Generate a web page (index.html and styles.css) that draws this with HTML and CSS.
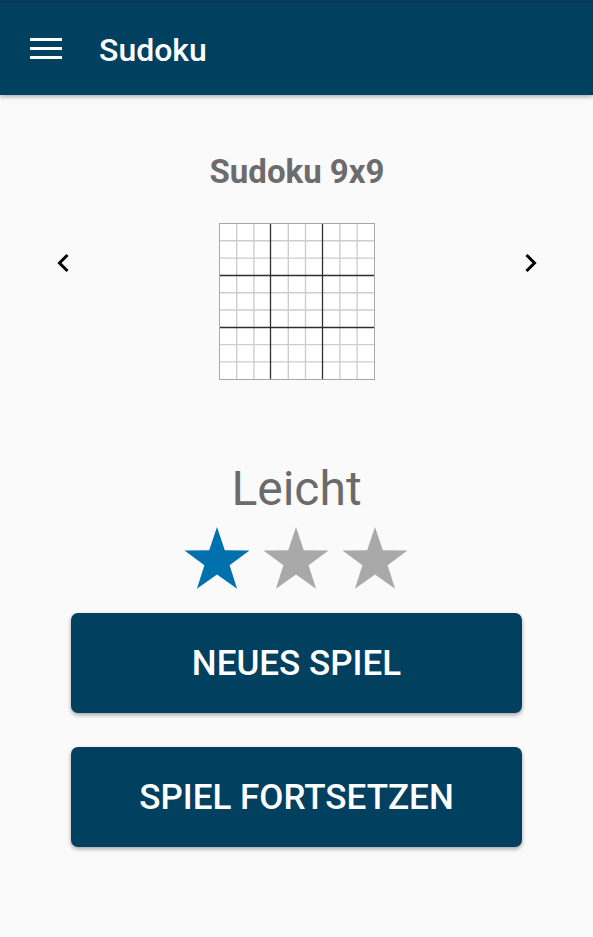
FILE: index.html
```html
<!DOCTYPE html>
<html lang="de">
<head>
<meta charset="utf-8">
<title>Sudoku</title>
<link rel="stylesheet" href="styles.css">
</head>
<body>
<header class="appbar">
  <svg class="menu-icon" width="32" height="24" viewBox="0 0 32 24" aria-hidden="true">
    <rect x="0" y="2" width="32" height="3" fill="#fff"/>
    <rect x="0" y="11" width="32" height="3" fill="#fff"/>
    <rect x="0" y="20" width="32" height="3" fill="#fff"/>
  </svg>
  <h1 class="appbar-title">Sudoku</h1>
</header>
<main class="content">
  <h2 class="game-title">Sudoku 9x9</h2>
  <div class="picker">
    <svg class="chevron" width="24" height="24" viewBox="0 0 24 24" aria-hidden="true">
      <path d="M15.5 4 L7.5 12 L15.5 20" fill="none" stroke="#000" stroke-width="3"/>
    </svg>
    <svg class="grid" width="156" height="157" viewBox="0 0 156 157" aria-hidden="true">
      <rect x="0.5" y="0.5" width="155" height="156" fill="#fff" stroke="#a8a8a8" stroke-width="1"/>
      <g stroke="#cdcdcd" stroke-width="1.4">
        <line x1="17.7" y1="1" x2="17.7" y2="156"/>
        <line x1="34.9" y1="1" x2="34.9" y2="156"/>
        <line x1="69.3" y1="1" x2="69.3" y2="156"/>
        <line x1="86.5" y1="1" x2="86.5" y2="156"/>
        <line x1="120.9" y1="1" x2="120.9" y2="156"/>
        <line x1="138.1" y1="1" x2="138.1" y2="156"/>
        <line x1="1" y1="17.8" x2="155" y2="17.8"/>
        <line x1="1" y1="35.1" x2="155" y2="35.1"/>
        <line x1="1" y1="69.7" x2="155" y2="69.7"/>
        <line x1="1" y1="87" x2="155" y2="87"/>
        <line x1="1" y1="121.6" x2="155" y2="121.6"/>
        <line x1="1" y1="138.9" x2="155" y2="138.9"/>
      </g>
      <g stroke="#2e2e2e" stroke-width="1.3">
        <line x1="51.5" y1="1" x2="51.5" y2="156"/>
        <line x1="103.5" y1="1" x2="103.5" y2="156"/>
        <line x1="1" y1="52.5" x2="155" y2="52.5"/>
        <line x1="1" y1="104.5" x2="155" y2="104.5"/>
      </g>
    </svg>
    <svg class="chevron" width="24" height="24" viewBox="0 0 24 24" aria-hidden="true">
      <path d="M8.5 4 L16.5 12 L8.5 20" fill="none" stroke="#000" stroke-width="3"/>
    </svg>
  </div>
  <p class="level">Leicht</p>
  <div class="stars">
    <svg class="star" width="66" height="62" viewBox="0 0 66 62" aria-hidden="true">
      <path d="M33 0 L40.8 23.3 L65.5 23.5 L45.6 38.2 L53.1 61.7 L33 47.4 L12.9 61.7 L20.4 38.2 L0.5 23.5 L25.2 23.3 Z" fill="#0071ae"/>
    </svg>
    <svg class="star" width="66" height="62" viewBox="0 0 66 62" aria-hidden="true">
      <path d="M33 0 L40.8 23.3 L65.5 23.5 L45.6 38.2 L53.1 61.7 L33 47.4 L12.9 61.7 L20.4 38.2 L0.5 23.5 L25.2 23.3 Z" fill="#a9a9a9"/>
    </svg>
    <svg class="star" width="66" height="62" viewBox="0 0 66 62" aria-hidden="true">
      <path d="M33 0 L40.8 23.3 L65.5 23.5 L45.6 38.2 L53.1 61.7 L33 47.4 L12.9 61.7 L20.4 38.2 L0.5 23.5 L25.2 23.3 Z" fill="#a9a9a9"/>
    </svg>
  </div>
  <div class="actions">
    <button class="btn">NEUES SPIEL</button>
    <button class="btn">SPIEL FORTSETZEN</button>
  </div>
</main>
</body>
</html>
```

FILE: styles.css
```css
* { box-sizing: border-box; }

html, body {
  margin: 0;
  padding: 0;
  background: #fafafa;
  font-family: Roboto, "Noto Sans", "Liberation Sans", sans-serif;
  width: 593px;
  height: 937px;
  overflow: hidden;
}

.appbar {
  height: 95px;
  background: #02405f;
  border-top: 3px solid #023a57;
  display: flex;
  align-items: center;
  padding-left: 30px;
  box-shadow: 0 2px 4px rgba(0, 0, 0, 0.3);
  position: relative;
  z-index: 1;
}

.menu-icon {
  display: block;
  margin-top: -2px;
}

.appbar-title {
  margin: 0 0 0 37px;
  color: #fff;
  font-size: 32px;
  font-weight: 500;
  line-height: 1;
  margin-top: 1px;
}

.content {
  display: flex;
  flex-direction: column;
  align-items: center;
}

.game-title {
  margin: 58px 0 0;
  font-size: 33px;
  font-weight: 700;
  color: #6c6c6c;
  line-height: 38px;
  padding-left: 1px;
}

.picker {
  width: 100%;
  display: flex;
  align-items: center;
  justify-content: space-between;
  padding: 0 51px 0 52px;
  margin-top: 32px;
}

.chevron {
  display: block;
  margin-top: -78px;
}

.grid {
  display: block;
  margin-left: -1px;
}

.level {
  margin: 81px 0 0;
  font-size: 48px;
  font-weight: 400;
  color: #6b6b6b;
  line-height: 56px;
}

.stars {
  display: flex;
  gap: 13px;
  margin-top: 10px;
  padding-right: 1px;
}

.star {
  display: block;
}

.actions {
  display: flex;
  flex-direction: column;
  gap: 34px;
  margin-top: 24px;
  width: 451px;
}

.btn {
  height: 100px;
  width: 100%;
  border: none;
  border-radius: 7px;
  background: #02405f;
  color: #fff;
  font-family: Roboto, "Noto Sans", "Liberation Sans", sans-serif;
  font-size: 35px;
  font-weight: 500;
  letter-spacing: 0;
  box-shadow: 0 2px 4px rgba(0, 0, 0, 0.35);
  padding: 0;
}
```
